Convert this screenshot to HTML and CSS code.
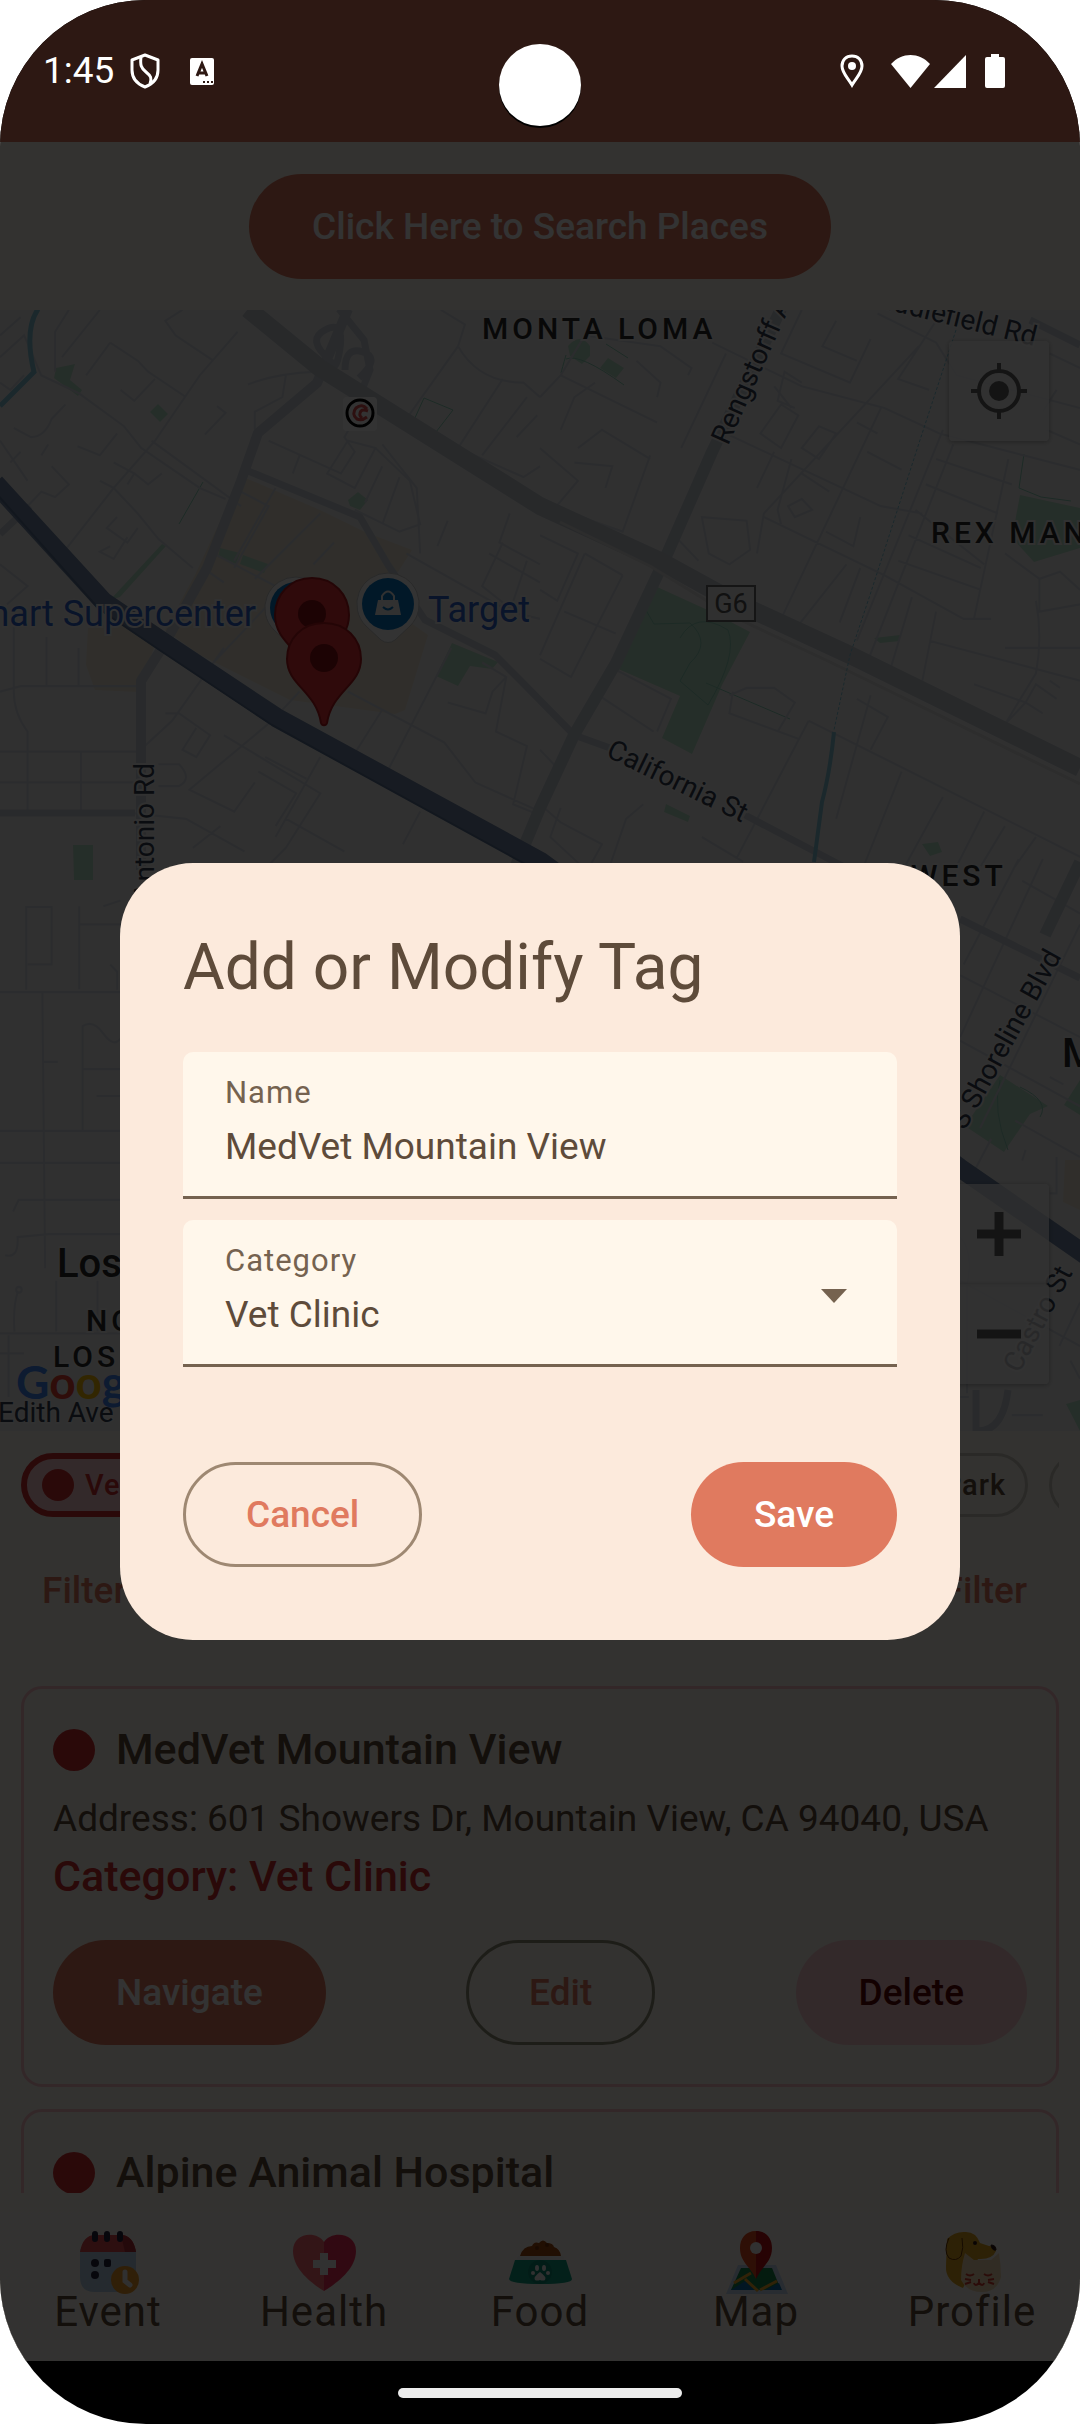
FILE: index.html
```html
<!DOCTYPE html>
<html lang="en">
<head>
<meta charset="utf-8">
<meta name="viewport" content="width=device-width, initial-scale=1">
<title>Pet Places</title>
<link rel="stylesheet" href="styles.css">
</head>
<body>
<div class="screen">
  <header class="status">
    <span class="status-time">1:45</span>
    <svg class="status-shield" width="30" height="36" viewBox="0 0 30 36" fill="none" stroke="#fff" stroke-width="3" stroke-linejoin="round"><path d="M15 2 28 7v10c0 8-5 14-13 17C7 31 2 25 2 17V7z"/><path d="M11 4c-1 8 0 11 5 15s6 6 4 12"/></svg>
    <svg class="status-a" width="24" height="27" viewBox="0 0 24 27"><rect width="24" height="27" rx="2" fill="#fff"/><path d="M7 18 12 6l5 12M9 15h6" fill="none" stroke="#2d1813" stroke-width="3"/><path d="M13 24h2m2 0h2m2 0h2" stroke="#2d1813" stroke-width="2"/></svg>
    <span class="status-space"></span>
    <svg class="status-pin" width="24" height="34" viewBox="0 0 24 34"><path d="M12 2C6 2 2 6 2 12c0 7 6 12 10 19 4-7 10-12 10-19 0-6-4-10-10-10z" fill="none" stroke="#fff" stroke-width="3"/><circle cx="12" cy="12" r="4" fill="#fff"/></svg>
    <svg class="status-wifi" width="39" height="33" viewBox="0 0 39 33"><path d="M0 9C11-3 28-3 39 9L19.500 33z" fill="#fff"/></svg>
    <svg class="status-signal" width="32" height="33" viewBox="0 0 32 33"><path d="M32 0v33H0z" fill="#fff"/></svg>
    <svg width="20" height="34" viewBox="0 0 20 34"><path d="M6 0h8v3h4q2 0 2 2v27q0 2-2 2H2q-2 0-2-2V5q0-2 2-2h4z" fill="#fff"/></svg>
    <span class="camera"></span>
  </header>

  <div class="app">
    <main class="page">
      <div class="search"><button class="btn btn-filled" type="button">Click Here to Search Places</button></div>

      <section class="map" aria-label="Map">
        <svg class="map-art" viewBox="0 0 1080 1121" preserveAspectRatio="xMidYMid slice">
          <rect width="1080" height="1121" fill="#f0f0f0"/>
          <!-- shopping districts -->
          <g fill="#ede6d6">
            <path d="M241 166 320 200 365 222 412 240 398 262 388 262 400 305 428 325 405 400 395 404 290 390 200 345 165 320 195 265z"/>
            <path d="M88 318 130 310 155 335 138 382 95 380 86 355z"/>
            <path d="M1065 850h15v50l-17-8z"/>
          </g>
          <!-- parks -->
          <g fill="#bbe3cb">
            <path d="M56 58 75 54 70 70 82 80 78 86 54 68z"/><path d="M150 102 158 94 168 104 160 112z"/>
            <path d="M110 290 162 234 166 236 120 287z"/><path d="M220 238 240 243 236 254 218 247zM243 245 268 254 264 263 240 254z"/>
            <path d="M348 190 358 182 368 190 360 200 350 196z"/><path d="M452 333 498 352 492 359 470 356 458 376 436 366z"/>
            <path d="M655 276 712 302 750 322 722 375 692 444 662 428 680 386 616 358z"/>
            <path d="M568 36q12-14 22 0v10l-8 8-12-8z"/><path d="M608 48 624 58 616 68 600 58z"/>
            <path d="M1020 185 1080 198v40l-46 14-22-24z"/><path d="M666 494 690 506 688 512 664 502z"/>
            <path d="M874 328 900 325v6l-20 2z"/><path d="M73 535h20v35H74z"/><path d="M922 534 938 532 942 542 930 546z"/>
            <path d="M1000 765 1048 796 1030 804 1004 842 965 816z"/><path d="M1080 770v35l-16-10zM1066 1094l14-4v31z"/>
          </g>
          <g fill="none" stroke="#8fd3bb" stroke-width="1">
            <path d="M566 45q-4 14-5 18M566 49q14-6 58 26M606 34l22 14M640 290l14 24 36-1q22 20 0 40l-10 18 28 24q30-50 20-75-32-20-48 8M706 373l84 36M1024 144l-5 34 22 9 30 4M1000 770q-8 30 8 70M1020 777q30 14 20 30"/>
            <path d="M424 88 453 100 436 122 414 110zM203 172l-24 42"/>
          </g>
          <!-- local streets -->
          <g fill="none" stroke="#d8dce3" stroke-width="2">
            <g transform="matrix(.3444 0 0 .3635 0 -11)" stroke-width="6">
              <path d="M0 100 60 50M0 160 70 100 120 210 230 260 360 350 410 410 580 520 655 550M0 230 30 250 70 210M200 30 160 90V200M320 120 250 210M290 30 180 160M320 120 400 170 430 200 540 270M530 30 480 60 510 100 620 170M690 90 580 210 450 390 330 520 190 690M40 355l50 25q40 0 60-50L190 290M340 370l-50 60-65-25M350 250l40 30 60-60M630 295l25 18-60 60M0 390l80 110M60 420l-30 30M120 430l20-30M440 390l260 180M150 460l50 50-40 35-40-15-50 50M290 500l40 20 70 70 60 70 100 80M330 450l60 30-20 30M470 480l-40 30-40-30"/>
              <path d="M340 600l-30 30 60 40 30-40M320 680l-30 15 40 20 40-60M0 730l80 60-60 50M720 235q80-30 200-35M830 210l-10 60-80 40v50M780 390l210 90 40-60-30-40 30-50M850 480l20-50M1090 410l-60 110-80-40 60-90zM1090 410l100 90 30 120-60 20-130-60M1110 460l-50 100M1160 490l-50 130M1220 700l-10-180-100-120M1330 130q60 100 190 100l48 40M1330 130l20-60-70-40M1330 130l-150 200M1460 220l-130 190 190 80 48-30M1530 270l-130 160M1500 380l60-60"/>
              <path d="M590 740l60 40M700 530l80 40-100 170M800 520l-120 200M930 590l-190 180M620 700l200 100-240 240M970 670l-60 60M1300 610l-30 70M1180 700l300 160 88 20M1480 590l-30 80 118 60M1460 670l-60 120 80 60M1530 720l-50 140M0 1080l60-15H400M40 880V1080q0 60 40 110V1410M135 930V1065M228 960V1065M0 1245H400M235 1245V1410M0 1330H390M0 1415h390l150 15 170 90M1420 700l148 80M460 1280h60q40 40 0 60h-60M420 1230l80-70 150-200M480 1140h40l90 60-40 60-40-20 40-60M650 1200l280 160-100 150-60 57M870 1080l-80 80-240 190 130 60 60-80M770 1260l120 60M750 1300l110 60-60 90M930 1260l-130 220M1010 1080l280 140 90 110 188 80M1110 1130l-80 120M1310 960l-180 330M1300 1110l110 30 20-60 40-40M1400 1000l70 40-30 150 90 40-40 160 78 30M830 1430l170 90M1220 1410l-50 90M640 1450l-80 60"/>
            </g>
            <g transform="matrix(.3444 0 0 .3635 540 -11)" stroke-width="6">
              <path d="M0 270 60 210 340 340M60 210 130 100 350 130 440 190 430 210M280 170l70 60-10 40M540 150 410 410M500 120 760 240 1000 300 1160 370 1568 470M540 370l450 200 120 20M760 30l-60 120 200 80 60-120M860 60l-40 70 100 40M980 40l170 80 60 90 358 90M1150 60l-110 160 90 30M1100 130l-450 460-20 110M990 300L700 880M1170 360L920 940M1200 400l-250 600M1360 440l-100 440M1150 440l220 70M1120 510l210 80M1090 580l200 150M1070 650l210 90M1040 720l240 80M650 600l350 160 230 120h80M680 420l-50 100M730 440l-40 140 10 40M860 370l-50 70-50-30 50-60zM730 300l-50-60M700 290l-60 80 60 40 50-90zM760 230l-50-30-20 80 50 20M840 530l-80-50M760 550l-40 20 20 30 50-20zM920 340l60 30M950 420l100 50M830 640l80 40 20-80M890 730l-150 180M930 740l-60 150M1080 820l-60 190M1150 860l-40 190M1130 940l438 110M0 560l240 80 80-210M0 410l110 90-80 90M100 450l110 10-20 60M60 360l40-90 60-40M110 410l70-50 140 80"/>
              <path d="M0 650l110 50-60 130-50-30M130 700L0 980M130 700l110 60M240 760L90 1040 0 990M70 860l150 60M0 1240l60 60-60 100M170 1090l160 100M220 1020l160 80-40 90M0 1390l60 50 120 60-40 68M60 1400l-30 80 100 88M300 1390l-50 40-50 137M470 1480l120 68M560 1080l-10 60 200 70M550 1090l50-20h80l60 40-50 80M780 1160L570 1540M780 1160l800 380M920 1100l90 50-50 90M960 1090l-100 340M1050 1300l-110 260M1170 1370l-110 190M1290 1410l-80 150M1350 1450l-70 110M1440 1480l-60 80M1350 700l100 70v90l118-20M1450 770l60-20 58 50M1440 830q20 100 0 200l-90 140M1350 960h218M1480 1050l30 20M1260 1060l150 50 30-50 60 40M1270 1140l80 30 60-60 50 30M470 600l130 10 10 80-60 40-60-30zM400 660l60 60M1470 360l98 40M1480 150l88 40M1500 250l-40 60"/>
            </g>
            <g transform="matrix(.3444 0 0 .3635 0 549)" stroke-width="6">
              <path d="M76 360V132h74v158H80M230 130v228M230 180h120M300 130l50-16M0 366h350M123 366l8 760M320 290l20 20v50M240 745V460q30-20 60 20t50 14M128 558h40M240 578h110M280 652h70M0 748h350M0 836h350M38 970l16-32h296M15 1090q40 10 36-50l90-8h210M52 1190q-15 40-10 110M0 1305h350M163 1160v140M283 1160v140M25 1310v170M0 1360h70"/>
              <circle cx="55" cy="1185" r="8"/>
            </g>
            <g transform="matrix(.3444 0 0 .3635 540 549)" stroke-width="6">
              <path d="M1460 0L1220 490M1390 0L1230 290M1220 320l348 170M1400 60l168 90M1568 180l-290 560M1310 770l-50 90M1220 500l348 180M1380 720l188 100M1480 600l40 20M1410 800l-10 30M1500 820v100h-20M1220 1160l348 180M1568 1220l-60 120M1540 1380l28 50M1220 1480h25M1370 1530h90M1220 1040q40 40 20 130v300"/>
            </g>
          </g>
          <!-- secondary roads -->
          <g fill="none" stroke="#cbd2db" stroke-width="7">
            <path d="M241 158 360 207 388 255 425 310 495 345 522 372 574 425 610 438M745 505 850 560M0 224 30 196M0 503h135M960 609 1080 668M976 1080v41M1008 1080q-5 41-30 41M1030 10 1080 35"/>
            <path d="M339-1 364 30 370 60 360 85M330 50q-24-20-5-30t15 18-10 12M345 60q0-24 18-18t-4 26"/>
          </g>
          <!-- arterials -->
          <g fill="none" stroke-linejoin="round">
            <path d="M348-1 317 73 258 123 241 171 207 258 165 333 141 371V560" stroke="#cbd1da" stroke-width="10"/>
            <path d="M781-1 712 142 664 251 616 353 574 425 540 498 510 570M1080 552 1045 625" stroke="#c9cfd8" stroke-width="12"/>
            <path d="M248-1 320 58 430 127 540 196 660 251 733 291 850 345 1080 458" stroke="#c5cbd3" stroke-width="18"/>
            <path d="M560 212 650 256 730 305 830 352 1080 474" stroke="#dedede" stroke-width="3"/>
            <path d="M-5 173 103 291 165 333 276 407 540 551 960 858 1090 948" stroke="#7388a8" stroke-width="19"/>
            <path d="M-5 182 99 299 161 341 272 415 536 560 956 867" stroke="#5d7396" stroke-width="2"/>
          </g>
          <!-- creeks -->
          <g fill="none" stroke="#86c9dc">
            <path d="M38-1Q24 20 34 62L0 96" stroke-width="5"/>
            <path d="M834 422q-4 40-12 70l-8 60" stroke-width="4"/>
            <path d="M956 20 920 130 870 285 850 345 834 420" stroke-width="1" stroke-dasharray="3 2"/>
          </g>
          <!-- pins -->
          <rect x="343" y="87" width="34" height="34" rx="4" fill="#fff"/>
          <circle cx="360" cy="103" r="13" fill="#fff" stroke="#000" stroke-width="3"/>
          <path d="M367 99q-5-6-11-1-5 6 1 11 5 2 10-2M368 101q-5-2-7 0-3 4 1 7" fill="none" stroke="#e05050" stroke-width="3"/>
          <g class="shop-pins">
            <path d="M388 263a31 31 0 0 1 22 53L395 330q-7 5-14 0l-15-14a31 31 0 0 1 22-53z" fill="#fff" stroke="#ccc"/>
            <circle cx="388" cy="294" r="26" fill="#0879c8"/>
            <path d="M378 290h20l3 15h-26z" fill="#f4f4f4"/><path d="M382 290v-4q6-9 12 0v4" fill="none" stroke="#f4f4f4" stroke-width="2"/><path d="M383 297q5 5 10 0" fill="none" stroke="#0879c8" stroke-width="2"/>
            <path d="M296 267a31 31 0 0 1 22 53L303 334q-7 5-14 0l-15-14a31 31 0 0 1 22-53z" fill="#fff" stroke="#ccc"/>
            <circle cx="296" cy="298" r="26" fill="#0879c8"/>
          </g>
          <g fill="#e8343a" stroke="#b51a1e" stroke-width="2">
            <path d="M312 268c-22 0-37 17-37 37 0 29 31 36 37 67 6-31 37-38 37-67 0-20-15-37-37-37z"/>
            <circle cx="312" cy="304" r="14" fill="#8c0f14" stroke="none"/>
            <path d="M324 313c-22 0-37 16-37 36 0 26 29 32 34 64 1 3 5 3 6 0 5-32 34-38 34-64 0-20-15-36-37-36z"/>
            <circle cx="324" cy="348" r="14" fill="#8c0f14" stroke="none"/>
          </g>
          <rect x="707" y="276" width="48" height="35" fill="#f0f0f0" stroke="#6a6a6a" stroke-width="2"/>
          <!-- labels -->
          <g class="map-labels">
            <text class="area" x="482" y="29">MONTA LOMA</text>
            <text class="area" x="931" y="233">REX MANOR</text>
            <text class="area" x="911" y="576">WEST</text>
            <text class="area" x="86" y="1021">NORTH</text>
            <text class="area" x="53" y="1057">LOS ALTOS</text>
            <text class="city" x="57" y="967">Los Altos</text>
            <text class="city" x="1062" y="757">Mountain View</text>
            <text class="shield" x="731" y="303">G6</text>
            <text class="poi" x="256" y="316" text-anchor="end">Walmart Supercenter</text>
            <text class="poi" x="428" y="312">Target</text>
            <text class="road" transform="translate(728 136) rotate(-66)">Rengstorff Ave</text>
            <text class="road" transform="translate(1034 36) rotate(14)" text-anchor="end">Middlefield Rd</text>
            <text class="road" transform="translate(605 446) rotate(26)">California St</text>
            <text class="road" transform="translate(154 453) rotate(-90)" text-anchor="end">San Antonio Rd</text>
            <text class="road" transform="translate(965 821) rotate(-61)">S Shoreline Blvd</text>
            <text class="road" transform="translate(1019 1064) rotate(-62)">Castro St</text>
            <text class="road" x="-2" y="1112">Edith Ave</text>
            <text class="logo" x="16" y="1089"><tspan fill="#4285f4">G</tspan><tspan fill="#ea4335">o</tspan><tspan fill="#fbbc05">o</tspan><tspan fill="#4285f4">g</tspan><tspan fill="#34a853">l</tspan><tspan fill="#ea4335">e</tspan></text>
          </g>
        </svg>
        <button class="map-btn map-locate" type="button" aria-label="My location">
          <svg width="58" height="58" viewBox="0 0 58 58" fill="none" stroke="#666" stroke-width="4"><circle cx="29" cy="29" r="20"/><circle cx="29" cy="29" r="10" fill="#666" stroke="none"/><path d="M29 1v9M29 48v9M1 29h9M48 29h9"/></svg>
        </button>
        <div class="map-zoom">
          <button class="map-btn" type="button" aria-label="Zoom in"><svg width="44" height="44" viewBox="0 0 44 44" stroke="#666" stroke-width="9"><path d="M0 22h44M22 0v44"/></svg></button>
          <button class="map-btn" type="button" aria-label="Zoom out"><svg width="44" height="44" viewBox="0 0 44 44" stroke="#666" stroke-width="9"><path d="M0 22h44"/></svg></button>
        </div>
      </section>

      <div class="chips">
        <button class="chip chip-active" type="button"><span class="chip-dot"></span>Vet Clinic</button>
        <button class="chip chip-end" type="button">Park</button>
        <button class="chip chip-next" type="button" aria-label="Next category"></button>
      </div>
      <div class="filters">
        <button class="btn btn-text" type="button">Filter</button>
        <button class="btn btn-text" type="button">Filter</button>
      </div>

      <section class="list">
        <article class="card">
          <h2 class="card-title"><span class="dot"></span>MedVet Mountain View</h2>
          <p class="card-address">Address: 601 Showers Dr, Mountain View, CA 94040, USA</p>
          <p class="card-category">Category: Vet Clinic</p>
          <div class="card-actions">
            <button class="btn btn-filled" type="button">Navigate</button>
            <button class="btn btn-outline" type="button">Edit</button>
            <button class="btn btn-danger" type="button">Delete</button>
          </div>
        </article>
        <article class="card">
          <h2 class="card-title"><span class="dot"></span>Alpine Animal Hospital</h2>
        </article>
      </section>
    </main>

    <nav class="tabs">
      <a class="tab" href="#event">
        <svg width="63" height="63" viewBox="2 0 63 63"><path d="M5 18h56v28q0 15-15 15H20Q5 61 5 46z" fill="#b9d2ea"/><path d="M5 21Q8 4 20 4h26q12 0 15 17z" fill="#e04a50"/><path d="M46 4q12 0 15 17H50z" fill="#b52f38"/><path d="M20 3v5M32 3v5M45 3v5" stroke="#25253f" stroke-width="6" stroke-linecap="round"/><g fill="#25253f"><circle cx="20" cy="32" r="4"/><rect x="29" y="28" width="7" height="8" rx="2"/><circle cx="20" cy="44" r="4"/></g><circle cx="50" cy="49" r="14" fill="#ee9a2c"/><path d="M50 41v9l5 4" stroke="#eee" stroke-width="5" fill="none" stroke-linecap="round"/></svg>
        Event</a>
      <a class="tab" href="#health">
        <svg width="63" height="63" viewBox="0 0 63 63"><path d="M31 11C25 0 0 0 0 20c0 18 18 32 31 40z" fill="#ff6874"/><path d="M31 11C37 0 63 0 63 20c0 18-19 32-32 40z" fill="#f5315c"/><path d="M31 22v22M20 33h23" stroke="#f5f5f5" stroke-width="8"/></svg>
        Health</a>
      <a class="tab" href="#food">
        <svg width="63" height="63" viewBox="0 0 63 63"><path d="M11 25Q14 15 23 15q2-5 7-3 4-5 8 0 6 0 7 4 6 2 7 9z" fill="#a34a12"/><circle cx="28" cy="17" r="2" fill="#7e350a"/><circle cx="38" cy="14" r="2" fill="#7e350a"/><path d="M9 25h45l2 4H7z" fill="#f2f2f2"/><path d="M6 29h51l6 19q0 5-31 5T0 48z" fill="#12a084"/><circle cx="31" cy="41" r="12" fill="#0d8c73"/><g fill="#f2f2f2"><ellipse cx="28" cy="37" rx="2" ry="3"/><ellipse cx="35" cy="37" rx="2" ry="3"/><circle cx="24" cy="42" r="2"/><circle cx="39" cy="42" r="2"/><path d="M31 41q7 5 5 8-2 1-5 0-3 1-5 0-2-3 5-8z"/></g></svg>
        Food</a>
      <a class="tab" href="#map" aria-current="page">
        <svg width="63" height="63" viewBox="0 0 63 63"><path d="M13 34h38l12 29H1z" fill="#c6dcf2"/><path d="M16 37h31l9 22H6z" fill="#16864a"/><path d="M6 59 20 50l10 9zM40 59l14-7 3 7z" fill="#0c6fae"/><path d="M9 52 26 42M20 48l13 12M35 59l17-9" stroke="#f2ab28" stroke-width="3"/><path d="M31 0C20 0 15 8 15 17c0 14 10 18 16 31z" fill="#e64a1e"/><path d="M31 0c11 0 16 8 16 17 0 14-10 18-16 31z" fill="#c01216"/><circle cx="31" cy="17" r="6" fill="#f2f2f2"/></svg>
        Map</a>
      <a class="tab" href="#profile">
        <svg width="63" height="63" viewBox="0 0 63 63"><path d="M6 8Q14 0 25 1q10 0 14 11l9 3q7 0 7 5-4 9-18 8L22 57Q4 50 5 35z" fill="#e2a41e"/><path d="M8 7Q2 20 8 27q7 4 12-2 3-8 1-18" fill="#e2a41e" stroke="#6a3808" stroke-width="1"/><circle cx="34" cy="12" r="2" fill="#301818"/><path d="M50 14q5 0 5 5-4 1-5-5z" fill="#301818" stroke="#301818"/><path d="M24 22 33 29h17l8-7q2 12 2 24-4 15-19 15T20 49q0-14 4-27z" fill="#f5dcb4"/><path d="M25 43q4 3 8 0M43 43q4 3 8 0M24 48l6 1M24 53l6-2M47 49l6-1M47 51l6 2M38 48v4q-4 4-5 0M38 52q4 4 5 0" fill="none" stroke="#d83c30" stroke-width="2"/></svg>
        Profile</a>
    </nav>

    <div class="scrim">
      <form class="dialog" role="dialog" aria-labelledby="dialog-title">
        <h1 class="dialog-title" id="dialog-title">Add or Modify Tag</h1>
        <div class="fields">
          <div class="field">
            <label for="tag-name">Name</label>
            <input id="tag-name" type="text" value="MedVet Mountain View">
          </div>
          <div class="field">
            <label for="tag-category">Category</label>
            <select id="tag-category"><option>Vet Clinic</option></select>
            <span class="field-arrow"></span>
          </div>
        </div>
        <div class="dialog-actions">
          <button class="btn btn-cancel" type="button">Cancel</button>
          <button class="btn btn-filled" type="button">Save</button>
        </div>
      </form>
    </div>
  </div>

  <footer class="gesture"><span class="gesture-pill"></span></footer>
</div>
</body>
</html>
```
FILE: styles.css
```css
:root {
  --accent: #e07a5f;
  --accent-dim: #2d1813;
  --surface: #fff8f0;
  --ink: #5e4b3a;
  --red: #d32f2f;
  --track: 1px;
}

* { box-sizing: border-box; }

body {
  margin: 0;
  background: #fff;
  font-family: Roboto, "Noto Sans", sans-serif;
}

h1, h2, p { margin: 0; }
svg { display: block; flex: none; }
button, input, select { font-family: inherit; }

.screen {
  display: flex;
  flex-direction: column;
  height: 100vh;
  overflow: hidden;
  border-radius: 146px;
  background: #000;
}

/* status bar */
.status {
  position: relative;
  display: flex;
  align-items: center;
  height: 142px;
  padding: 0 75px 0 43px;
  background: var(--accent-dim);
  color: #fff;
}
.status-time { font-size: 37px; line-height: 42px; }
.status-shield { margin-left: 16px; }
.status-a { margin-left: 30px; }
.status-space { flex: 1; }
.status-pin { margin-right: 27px; }
.status-wifi { margin-right: 4px; }
.status-signal { margin-right: 19px; }
.camera {
  position: absolute;
  top: 44px;
  left: 50%;
  width: 82px;
  height: 82px;
  border-radius: 50%;
  background: #fff;
  box-shadow: 0 2px 0 #000;
  transform: translateX(-50%);
}

/* app */
.app {
  position: relative;
  display: flex;
  flex: 1;
  flex-direction: column;
  min-height: 0;
  background: var(--surface);
  color: var(--ink);
}
.page {
  display: flex;
  flex: 1;
  flex-direction: column;
  min-height: 0;
}
.search {
  display: flex;
  justify-content: center;
  padding: 32px 32px 31px;
}

.btn {
  height: 105px;
  padding: 0 63px;
  border: 0;
  border-radius: 53px;
  background: none;
  color: var(--accent);
  font-size: 37px;
  font-weight: 500;
  line-height: 52px;
  white-space: nowrap;
}
.btn-filled { background: var(--accent); color: #fff; }
.btn-outline { border: 3px solid #93917a; padding: 0 60px; }
.btn-cancel { border: 3px solid #9e8872; padding: 0 60px; }
.btn-danger { background: #ffcdd2; color: #600808; }
.btn-text { padding: 0 32px; }

/* map */
.map {
  position: relative;
  flex: 1121 1 0;
  min-height: 0;
  overflow: hidden;
}
.map-art { width: 100%; height: 100%; }
.map-labels text { paint-order: stroke; stroke: #f2f2f2; stroke-width: 4px; }
.map-labels .area { fill: #2c2c2c; font-size: 30px; font-weight: 500; letter-spacing: 4px; }
.map-labels .city { fill: #2c2c2c; font-size: 40px; font-weight: 500; }
.map-labels .shield { fill: #555; font-size: 27px; stroke: none; text-anchor: middle; }
.map-labels .poi { fill: #2f66cf; font-size: 36px; }
.map-labels .road { fill: #343f52; font-size: 28px; }
.map-labels .logo { font-family: Lato, sans-serif; font-size: 46px; font-weight: 700; stroke: none; }
.map-btn {
  display: grid;
  place-items: center;
  width: 100px;
  height: 100px;
  padding: 0;
  border: 0;
  border-radius: 4px;
  background: rgba(248, 248, 248, 0.75);
  box-shadow: 0 1px 5px rgba(0, 0, 0, 0.3);
}
.map-locate { position: absolute; top: 31px; right: 31px; }
.map-zoom { position: absolute; right: 31px; bottom: 47px; }

/* category chips */
.chips {
  display: flex;
  gap: 21px;
  margin: 22px 21px 21px;
  overflow: hidden;
}
.chip {
  display: flex;
  flex: none;
  align-items: center;
  gap: 11px;
  height: 64px;
  padding: 0 19px;
  border: 3px solid #cfcec0;
  border-radius: 32px;
  background: none;
  color: var(--ink);
  font-size: 29px;
  font-weight: 500;
  letter-spacing: var(--track);
}
.chip-active {
  padding: 0 15px;
  border: 6px solid var(--red);
  background: #ffcdd2;
  color: var(--red);
}
.chip-dot { width: 32px; height: 32px; border-radius: 50%; background: var(--red); }
.chip-end { margin-left: auto; }
.chip-next { width: 200px; margin-right: -190px; }
.filters {
  display: flex;
  justify-content: space-between;
  margin: 0 21px 43px 10px;
}

/* saved places */
.list {
  display: flex;
  flex: 507 1 0;
  flex-direction: column;
  gap: 22px;
  min-height: 0;
  padding: 0 21px;
  overflow: hidden;
}
.card {
  flex: none;
  padding: 29px 29px 39px;
  border: 3px solid #ffc0c8;
  border-radius: 21px;
}
.card-title {
  display: flex;
  align-items: center;
  gap: 21px;
  font-size: 43px;
  font-weight: 500;
  line-height: 63px;
}
.dot { width: 42px; height: 42px; border-radius: 50%; background: var(--red); }
.card-address { margin-top: 11px; font-size: 37px; line-height: 53px; }
.card-category {
  color: var(--red);
  font-size: 43px;
  font-weight: 500;
  line-height: 63px;
}
.card-actions {
  display: flex;
  justify-content: space-between;
  margin-top: 32px;
}

/* tab bar */
.tabs {
  display: flex;
  height: 149px;
  margin-top: 19px;
  padding-top: 19px;
  background: #fffaf2;
}
.tab {
  display: flex;
  flex: 1;
  flex-direction: column;
  align-items: center;
  color: var(--ink);
  font-size: 42px;
  line-height: 36px;
  letter-spacing: var(--track);
  text-decoration: none;
}

/* tag dialog */
.scrim {
  position: absolute;
  inset: 0;
  display: grid;
  place-items: center;
  padding: 0 120px;
  background: rgba(0, 0, 0, 0.8);
}
.dialog {
  width: 100%;
  padding: 63px 63px 73px;
  border-radius: 73px;
  background: #fceadc;
}
.dialog-title {
  font-size: 64px;
  font-weight: 400;
  line-height: 84px;
}
.fields {
  display: flex;
  flex-direction: column;
  gap: 21px;
  margin: 42px 0 95px;
}
.field {
  position: relative;
  display: flex;
  flex-direction: column;
  gap: 1px;
  height: 147px;
  padding: 20px 42px 0;
  border-bottom: 3px solid #75624f;
  border-radius: 10px 10px 0 0;
  background: #fff7eb;
}
.field label {
  color: #75624f;
  font-size: 31px;
  line-height: 42px;
  letter-spacing: var(--track);
}
.field input,
.field select {
  height: 63px;
  margin: 0;
  padding: 0;
  border: 0;
  outline: 0;
  appearance: none;
  background: none;
  color: var(--ink);
  font-size: 37px;
}
.field-arrow {
  position: absolute;
  top: 69px;
  right: 50px;
  width: 26px;
  height: 14px;
  background: #75624f;
  clip-path: polygon(0 0, 100% 0, 50% 100%);
  pointer-events: none;
}
.dialog-actions {
  display: flex;
  justify-content: space-between;
}

/* system navigation */
.gesture {
  display: grid;
  place-items: center;
  height: 63px;
}
.gesture-pill {
  width: 284px;
  height: 10px;
  border-radius: 5px;
  background: #ececec;
}
```
